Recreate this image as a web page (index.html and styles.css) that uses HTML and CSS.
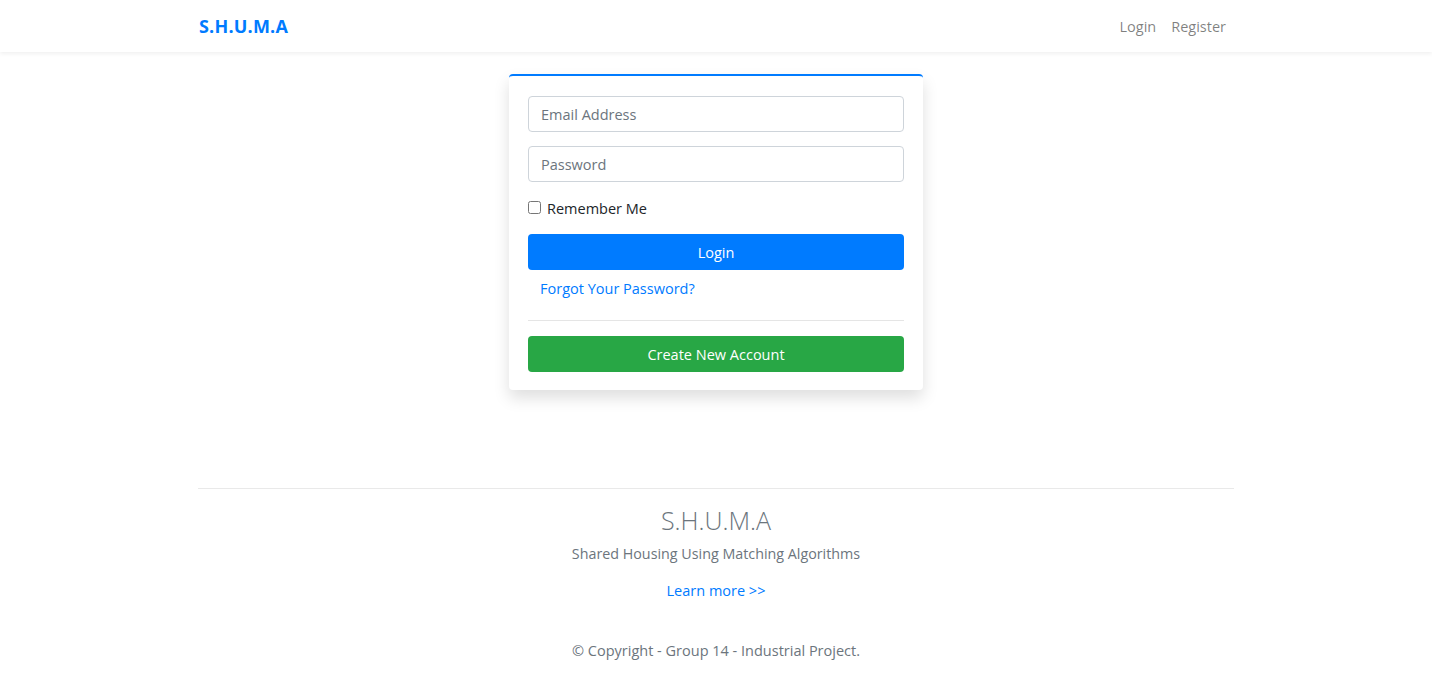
FILE: index.html
```html
<!DOCTYPE html>
<html lang="en">
<head>
<meta charset="utf-8">
<title>S.H.U.M.A</title>
<link rel="stylesheet" href="styles.css">
</head>
<body>
<nav class="navbar">
  <div class="container nav-inner">
    <a class="brand" href="#">S.H.U.M.A</a>
    <div class="nav-links">
      <a href="#">Login</a>
      <a href="#">Register</a>
    </div>
  </div>
</nav>
<main class="main">
  <div class="card">
    <input class="field" type="email" placeholder="Email Address">
    <input class="field" type="password" placeholder="Password">
    <label class="check"><input type="checkbox"><span>Remember Me</span></label>
    <button class="btn btn-primary">Login</button>
    <a class="forgot" href="#">Forgot Your Password?</a>
    <hr class="sep">
    <button class="btn btn-success">Create New Account</button>
  </div>
</main>
<footer class="container footer">
  <h2 class="foot-title">S.H.U.M.A</h2>
  <p class="foot-sub">Shared Housing Using Matching Algorithms</p>
  <a class="learn" href="#">Learn more &gt;&gt;</a>
  <p class="copy">© Copyright - Group 14 - Industrial Project.</p>
</footer>
</body>
</html>
```
FILE: styles.css
```css
* { box-sizing: border-box; }
body {
  margin: 0;
  font-family: "Open Sans", "Noto Sans", Arial, sans-serif;
  font-size: 14.5px;
  color: #212529;
  background: #fff;
}
a { text-decoration: none; }
.container {
  width: 1036px;
  margin: 0 auto;
}
.navbar {
  height: 52px;
  background: #fff;
  box-shadow: 0 2px 4px rgba(0,0,0,0.06);
}
.nav-inner {
  height: 52px;
  display: flex;
  align-items: center;
  justify-content: space-between;
}
.brand {
  color: #007bff;
  font-weight: 700;
  font-size: 18px;
  letter-spacing: 0.2px;
  padding-left: 1px;
}
.nav-links { display: flex; }
.nav-links a {
  color: rgba(0,0,0,0.5);
  padding: 0 8px 0 7px;
  font-size: 14.5px;
}
.main {
  display: flex;
  justify-content: center;
  padding-top: 22px;
}
.card {
  width: 414px;
  background: #fff;
  border-top: 2px solid #007bff;
  border-radius: 4px;
  box-shadow: 0 8px 16px rgba(0,0,0,0.13);
  padding: 20px 19px 18px;
  display: flex;
  flex-direction: column;
}
.field {
  height: 36px;
  border: 1px solid #ced4da;
  border-radius: 4px;
  padding: 1px 12px 0;
  font-family: inherit;
  font-size: 14.5px;
  color: #495057;
  margin-bottom: 14px;
}
.field::placeholder { color: #6c757d; }
.check {
  display: flex;
  align-items: center;
  height: 22px;
  margin-top: 1px;
  margin-bottom: 15px;
  font-size: 14.5px;
}
.check input {
  margin: 0 6px 0 0;
  width: 13px;
  height: 13px;
  position: relative;
  top: -1px;
}
.btn {
  height: 36px;
  border: none;
  border-radius: 4px;
  color: #fff;
  font-family: inherit;
  font-size: 14.5px;
}
.btn-primary { background: #007bff; }
.btn-success { background: #28a745; }
.forgot {
  color: #007bff;
  padding: 0 12px;
  height: 38px;
  line-height: 38px;
  margin-bottom: 12px;
}
.sep {
  border: 0;
  border-top: 1px solid #e5e5e5;
  margin: 0 0 15px;
}
.footer {
  margin-top: 98px;
  border-top: 1px solid #e9e9e9;
  text-align: center;
  color: #6c757d;
  padding-top: 15px;
}
.foot-title {
  margin: 0;
  font-size: 25px;
  font-weight: 300;
  line-height: 32px;
  color: #6c757d;
}
.foot-sub {
  margin: 7px 0 0;
  font-size: 14.3px;
  line-height: 22px;
}
.learn {
  display: inline-block;
  margin-top: 15px;
  color: #007bff;
  line-height: 22px;
}
.copy {
  margin: 38px 0 0;
  line-height: 22px;
}
```
